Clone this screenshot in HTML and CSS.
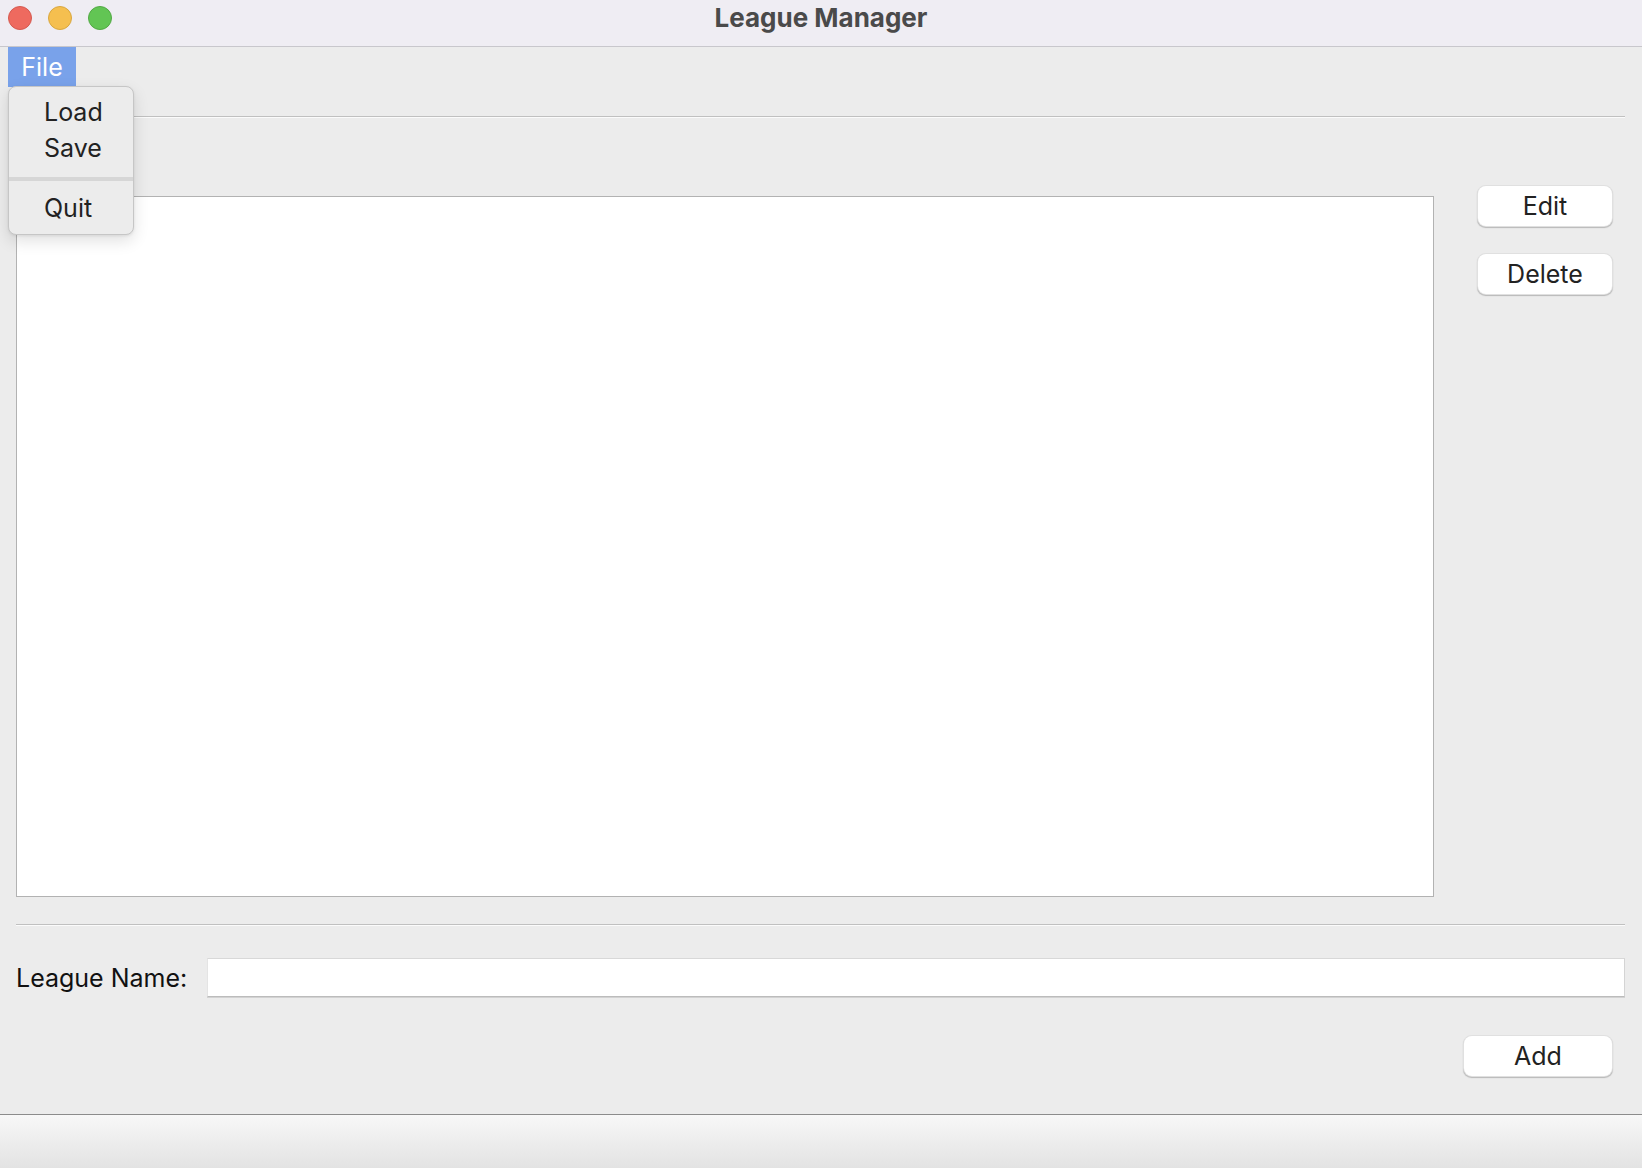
FILE: index.html
```html
<!DOCTYPE html>
<html>
<head>
<meta charset="utf-8">
<link rel="stylesheet" href="styles.css">
</head>
<body>
<div class="window">
  <div class="titlebar">
    <div class="lights">
      <span class="light red"></span>
      <span class="light yellow"></span>
      <span class="light green"></span>
    </div>
    <div class="title">League Manager</div>
  </div>
  <div class="menubar">
    <div class="menu-item active">File</div>
  </div>
  <div class="content">
    <div class="separator sep-top"></div>
    <div class="list-row">
      <div class="listbox"></div>
      <div class="side-buttons">
        <button class="btn btn-side">Edit</button>
        <button class="btn btn-side">Delete</button>
      </div>
    </div>
    <div class="separator sep-bottom"></div>
    <div class="entry-row">
      <label class="entry-label">League Name:</label>
      <div class="entry"></div>
    </div>
    <div class="add-row">
      <button class="btn btn-add">Add</button>
    </div>
  </div>
  <div class="statusbar"></div>
  <div class="dropdown">
    <div class="dd-item">Load</div>
    <div class="dd-item">Save</div>
    <div class="dd-sep"></div>
    <div class="dd-item">Quit</div>
  </div>
</div>
</body>
</html>
```
FILE: styles.css
```css
html, body {
  margin: 0;
  padding: 0;
}
body {
  width: 1642px;
  height: 1168px;
  overflow: hidden;
  background: #ececec;
  font-family: Inter, "Liberation Sans", sans-serif;
  color: #222;
}
.window {
  position: relative;
  width: 1642px;
  height: 1168px;
  display: flex;
  flex-direction: column;
  background: #ececec;
}
.titlebar {
  height: 46px;
  border-bottom: 1px solid #c8c7cc;
  background: #efedf3;
  display: flex;
  align-items: center;
  position: relative;
}
.lights {
  display: flex;
  gap: 16px;
  padding-left: 8px;
  position: absolute;
  left: 0;
  top: 6px;
}
.light {
  width: 24px;
  height: 24px;
  border-radius: 50%;
  box-sizing: border-box;
}
.red { background: #ee6a5f; border: 1px solid #d55a50; }
.yellow { background: #f5bf4f; border: 1px solid #d9a73f; }
.green { background: #62c554; border: 1px solid #52a944; }
.title {
  flex: 1;
  text-align: center;
  font-weight: 700;
  font-size: 26px;
  color: #4a4a4a;
  margin-top: -11px;
}
.menubar {
  height: 39px;
  display: flex;
  padding-left: 8px;
}
.menu-item {
  width: 68px;
  height: 40px;
  line-height: 40px;
  text-align: center;
  font-size: 25px;
  color: #fff;
}
.menu-item.active {
  background: #79a2ea;
}
.content {
  flex: 1;
  display: flex;
  flex-direction: column;
  padding: 0 17px 0 16px;
}
.separator {
  height: 1px;
  background: #c0c0c0;
  border-bottom: 1px solid #fbfbfb;
}
.sep-top {
  margin-top: 30px;
}
.list-row {
  display: flex;
  margin-top: 68px;
  align-items: flex-start;
}
.listbox {
  width: 1416px;
  height: 699px;
  margin-top: 10px;
  background: #fff;
  border: 1px solid #b2b2b2;
}
.side-buttons {
  display: flex;
  flex-direction: column;
  gap: 28px;
  margin-left: 44px;
}
.btn {
  font-family: Inter, "Liberation Sans", sans-serif;
  font-size: 25px;
  color: #222;
  background: #fff;
  border: 0;
  border-radius: 8px;
  box-shadow: 0 0 0 1px #e0e0e0, 0 1px 1px 0.5px #b8b8b8;
  padding: 0;
  height: 40px;
}
.btn-side {
  width: 134px;
}
.sep-bottom {
  margin-top: 27px;
}
.entry-row {
  display: flex;
  align-items: center;
  margin-top: 32px;
}
.entry-label {
  font-size: 25px;
  color: #111;
  width: 191px;
}
.entry {
  flex: 1;
  height: 37px;
  background: #fff;
  border-top: 1px solid #d8d8d8;
  border-left: 1px solid #e4e4e4;
  border-right: 1px solid #d4d4d4;
  border-bottom: 1px solid #bcbcbc;
  box-shadow: 0 1px 0 #d2d2d2;
}
.add-row {
  display: flex;
  justify-content: flex-end;
  margin-top: 39px;
  padding-right: 13px;
}
.btn-add {
  width: 148px;
}
.statusbar {
  height: 53px;
  border-top: 1px solid #8c8c8c;
  background: linear-gradient(#f8f8f8, #ededed 50%, #e3e3e3);
  position: relative;
  overflow: hidden;
}
.statusbar::after {
  content: "";
  position: absolute;
  right: -10px;
  bottom: -10px;
  width: 20px;
  height: 20px;
  background: #1a1a1a;
  clip-path: path("M10 20 L20 20 L20 10 Q20 20 10 20 Z");
}
.dropdown {
  position: absolute;
  left: 8px;
  top: 86px;
  width: 124px;
  box-sizing: content-box;
  padding: 7px 0 8px;
  background: #ececec;
  border: 1px solid #c6c6c6;
  border-radius: 8px;
  box-shadow: 0 6px 16px rgba(0,0,0,0.12), 0 1px 3px rgba(0,0,0,0.08);
}
.dd-item {
  height: 36px;
  line-height: 36px;
  padding-left: 35px;
  font-size: 25px;
  color: #222;
}
.dd-sep {
  height: 4px;
  background: #d6d6d6;
  margin: 11px 0 9px;
}
```
